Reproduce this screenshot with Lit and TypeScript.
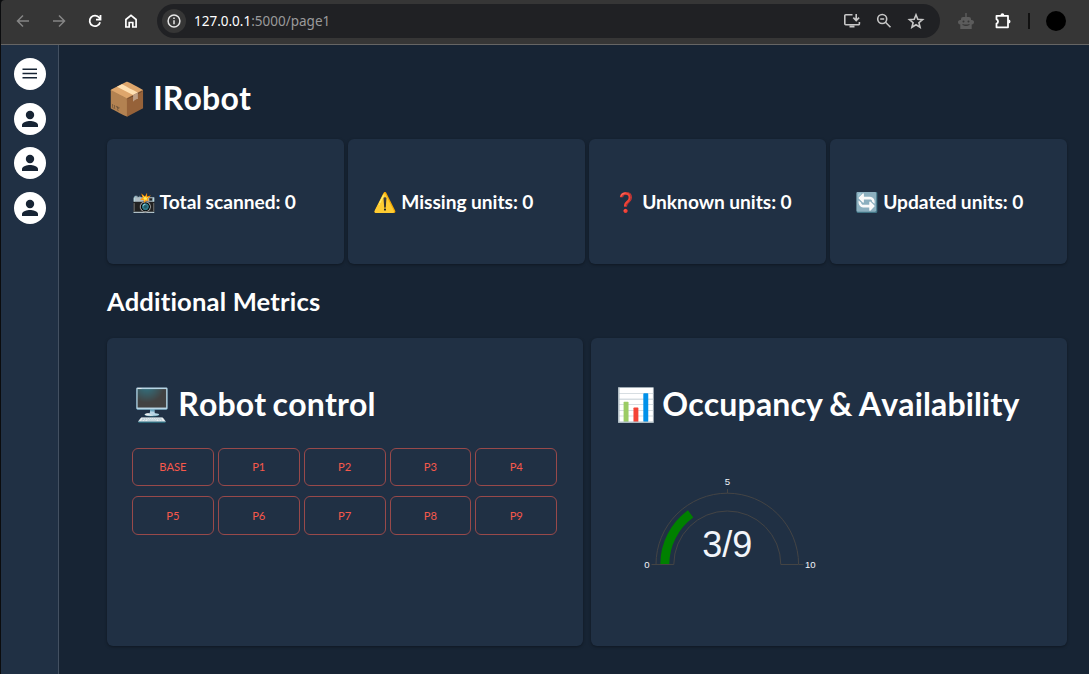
import { LitElement, html, css, svg } from "lit";
import { customElement } from "lit/decorators.js";

@customElement("browser-bar")
class BrowserBar extends LitElement {
  static styles = css`
    :host {
      display: flex;
      align-items: center;
      box-sizing: border-box;
      height: 45px;
      padding: 0 23px 3px 13px;
      background: #363636;
      border-bottom: 1px solid #666564;
      border-top-left-radius: 4px;
      font-family: "Noto Sans", "Open Sans", sans-serif;
      font-weight: 400;
    }
    svg { display: block; flex: none; }
    .nav { display: flex; gap: 18px; color: #fff; }
    .dim { color: #858585; }
    .omnibox {
      display: flex;
      align-items: center;
      box-sizing: border-box;
      width: 783px;
      height: 34px;
      margin-left: 17px;
      padding: 0 15px 0 5px;
      border-radius: 17px;
      background: #202124;
      color: #c7c7c7;
    }
    .info {
      display: grid;
      place-items: center;
      width: 24px;
      height: 24px;
      border-radius: 50%;
      background: #363636;
      color: #e6e6e6;
    }
    .url {
      flex: 1;
      margin-left: 8px;
      font-size: 13.5px;
      line-height: 20px;
      color: #fff;
    }
    .path { color: #9a9a9b; }
    .actions { display: flex; gap: 14px; }
    .extensions { display: flex; align-items: center; margin-left: 17px; color: #fff; }
    .bot { color: #5c5c5c; margin-right: 19px; }
    .divider { width: 2px; height: 16px; margin: 0 16px; background: #111; }
    .avatar { width: 20px; height: 20px; border-radius: 50%; background: #000; }
  `;

  render() {
    return html`
      <div class="nav">
        <svg class="dim" width="18" height="18" viewBox="0 0 18 18" fill="none" stroke="currentColor" stroke-width="1.5"><path d="M15 9H4M9 3.5 3.5 9 9 14.5" /></svg>
        <svg class="dim" width="18" height="18" viewBox="0 0 18 18" fill="none" stroke="currentColor" stroke-width="1.5"><path d="M3 9h11M9 3.5 14.5 9 9 14.5" /></svg>
        <svg width="18" height="18" viewBox="0 0 18 18" fill="none" stroke="currentColor" stroke-width="1.8"><path d="M14.1 10.2A5.3 5.3 0 1 1 13.3 5.8L14.2 7.1M14.5 3v4.6H10" /></svg>
        <svg width="18" height="18" viewBox="0 0 18 18" fill="none" stroke="currentColor" stroke-width="1.7"><path d="M3.9 15V7.500L9 3.400l5.100 4.100V15h-3.300v-4.500H7.200V15z" /></svg>
      </div>
      <div class="omnibox">
        <span class="info">
          <svg width="14" height="14" viewBox="0 0 14 14" fill="none" stroke="currentColor" stroke-width="1.5"><circle cx="7" cy="7" r="5.9" /><path d="M7 6.2v4M7 3.6v1.5" /></svg>
        </span>
        <span class="url">127.0.0.1<span class="path">:5000/page1</span></span>
        <div class="actions">
          <svg width="18" height="18" viewBox="0 0 18 18" fill="none" stroke="currentColor" stroke-width="1.6"><path d="M9.5 2.8H2.8a1 1 0 0 0-1 1v8a1 1 0 0 0 1 1h12.6a1 1 0 0 0 1-1V10M13.2 2v6.2M10.3 5.6l2.9 2.9 2.9-2.9" /><path d="M6.5 13.5h5v2h-5z" fill="currentColor" stroke="none" /></svg>
          <svg width="18" height="18" viewBox="0 0 18 18" fill="none" stroke="currentColor" stroke-width="1.6"><circle cx="7.2" cy="7" r="4.5" /><path d="m10.5 10.3 5 5M5.2 7h4" /></svg>
          <svg width="18" height="18" viewBox="0 0 18 18" fill="none" stroke="currentColor" stroke-width="1.6"><path d="m9 2.8 1.8 4.4 4.8.4-3.7 3.1 1.2 4.6L9 12.8l-4.1 2.5 1.2-4.6-3.7-3.1 4.8-.4z" /></svg>
        </div>
      </div>
      <div class="extensions">
        <svg class="bot" width="18" height="18" viewBox="0 0 18 18"><path fill="currentColor" fill-rule="evenodd" d="M8.3 4V2.5a.9.9 0 1 1 1.4 0V5H12a2 2 0 0 1 2 2v1h.7c1.6 0 2.3 1 2.3 2.2s-.7 2.2-2.3 2.2V17H3.300v-4.600C1.700 12.400 1 11.400 1 10.200S1.700 8 3.300 8H4V7a2 2 0 0 1 2-2h2.300zM6.500 8.500a1 1 0 1 0 0 2 1 1 0 0 0 0-2zm5 0a1 1 0 1 0 0 2 1 1 0 0 0 0-2zM5.500 12q3.500 1.200 7 0v1q-3.500 2-7 0z" /></svg>
        <svg width="18" height="18" viewBox="0 0 18 18"><path d="M2.500 3.800h11.500v11.500H2.500v-3.800a2.200 2.200 0 0 0 0-4.200z" fill="none" stroke="currentColor" stroke-width="1.800" stroke-linejoin="round" /><path d="M6.500 3.200a1.900 1.900 0 0 1 3.800 0zM14.500 7.500a2 2 0 0 1 0 4z" fill="currentColor" /></svg>
        <span class="divider"></span>
        <span class="avatar"></span>
      </div>
    `;
  }
}

@customElement("side-rail")
class SideRail extends LitElement {
  static styles = css`
    :host {
      display: flex;
      flex-direction: column;
      align-items: center;
      gap: 12.67px;
      box-sizing: border-box;
      width: 58px;
      padding-top: 13px;
      background: #203044;
      border-right: 1px solid #435061;
    }
    .item {
      display: grid;
      place-items: center;
      width: 32px;
      height: 32px;
      border-radius: 50%;
      background: #fff;
      color: #172434;
    }
    svg { display: block; }
  `;

  render() {
    const person = () => html`
      <span class="item">
        <svg width="24" height="24" viewBox="0 0 24 24" fill="currentColor"><circle cx="12" cy="8" r="4.200" /><path d="M4 20v-2c0-2.700 5.300-4 8-4s8 1.300 8 4v2z" /></svg>
      </span>`;
    return html`
      <span class="item">
        <svg width="16" height="12" viewBox="0 0 16 12" fill="none" stroke="currentColor" stroke-width="1.400"><path d="M.5 1.300H15M.5 5.500H15M.5 9.700H15" /></svg>
      </span>
      ${person()}${person()}${person()}
    `;
  }
}

@customElement("occupancy-gauge")
class OccupancyGauge extends LitElement {
  static styles = css`
    :host { display: block; font-weight: 400; }
    svg { display: block; font-family: "Liberation Sans", Arial, sans-serif; fill: #f2f5fa; }
    .track { fill: none; stroke: #444; stroke-width: 1; }
    .bar { fill: none; stroke: #008000; stroke-width: 9; }
    .tick { font-size: 9.600px; }
    .value { font-size: 36px; }
  `;

  render() {
    const cx = 111.300;
    const cy = 116.500;
    const at = (share: number, r: number) => {
      const a = Math.PI * (1 - share);
      return `${cx + r * Math.cos(a)} ${cy - r * Math.sin(a)}`;
    };
    return html`
      <svg width="425" height="150" viewBox="0 0 425 150">
        ${svg`
          <path class="bar" d="M${at(0, 62.500)}A62.500 62.500 0 0 1 ${at(0.3, 62.500)}" />
          <path class="track" d="M${at(0, 71.300)}A71.300 71.300 0 0 1 ${at(1, 71.300)}L${at(1, 53.500)}A53.500 53.500 0 0 0 ${at(0, 53.500)}Z" />
          <path class="track" d="M35.500 116.500h4.500M111.500 41v4M183 116.500h4.500" />
          <text class="tick" x="33.500" y="120" text-anchor="end">0</text>
          <text class="tick" x="111.300" y="37" text-anchor="middle">5</text>
          <text class="tick" x="189" y="120">10</text>
          <text class="value" x="111.300" y="109" text-anchor="middle">3/9</text>
        `}
      </svg>
    `;
  }
}

@customElement("app-root")
class AppRoot extends LitElement {
  static styles = css`
    :host {
      display: block;
      box-sizing: border-box;
      width: 1089px;
      height: 674px;
      padding-left: 1px;
      overflow: hidden;
      background: #0b0c0e;
      color: #fff;
      font-family: Lato, "Noto Color Emoji", sans-serif;
      font-weight: 700;
      font-variant-ligatures: none;
    }
    .body { display: flex; height: 629px; background: #172434; }
    .main { width: 960px; margin-left: 48px; }
    h1, h2, h3 { margin: 0; font-weight: 700; white-space: nowrap; }
    h1 {
      font-size: 32px;
      line-height: 40px;
      font-kerning: none;
      letter-spacing: 0.150px;
      word-spacing: -1.700px;
    }
    h2 { font-size: 25.600px; line-height: 32px; margin-top: 21px; letter-spacing: 0.170px; }
    h3 { font-size: 19.150px; line-height: 24px; word-spacing: -0.300px; }
    .title { margin-top: 33px; }
    .card {
      box-sizing: border-box;
      border-radius: 6px;
      background: #203044;
      box-shadow: 0 1px 3px rgba(0, 0, 0, 0.350);
    }
    .stats { display: grid; grid-template-columns: repeat(4, 1fr); gap: 4px; margin-top: 21px; }
    .stat { display: flex; align-items: center; height: 125px; padding: 0 25px; }
    .panels { display: grid; grid-template-columns: 1fr 1fr; gap: 8px; margin-top: 21px; }
    .panel { height: 308px; padding: 46px 25px 0; }
    .buttons {
      display: grid;
      grid-template-columns: repeat(5, 1fr);
      gap: 10px 4px;
      margin-top: 24px;
      width: 425.200px;
    }
    button {
      box-sizing: border-box;
      height: 38.400px;
      padding: 0;
      border: 1px solid #98494a;
      border-radius: 6px;
      background: transparent;
      color: #f6584b;
      font: 400 11.200px/18px Lato, sans-serif;
    }
    occupancy-gauge { margin-top: 24px; }
  `;

  private stats = ["📸 Total scanned: 0", "⚠️ Missing units: 0", "❓ Unknown units: 0", "🔄 Updated units: 0"];
  private targets = ["BASE", "P1", "P2", "P3", "P4", "P5", "P6", "P7", "P8", "P9"];

  render() {
    return html`
      <browser-bar></browser-bar>
      <div class="body">
        <side-rail></side-rail>
        <main class="main">
          <h1 class="title">📦 IRobot</h1>
          <div class="stats">
            ${this.stats.map((label) => html`<div class="card stat"><h3>${label}</h3></div>`)}
          </div>
          <h2>Additional Metrics</h2>
          <div class="panels">
            <section class="card panel">
              <h1>🖥️ Robot control</h1>
              <div class="buttons">${this.targets.map((name) => html`<button>${name}</button>`)}</div>
            </section>
            <section class="card panel">
              <h1>📊 Occupancy &amp; Availability</h1>
              <occupancy-gauge></occupancy-gauge>
            </section>
          </div>
        </main>
      </div>
    `;
  }
}
